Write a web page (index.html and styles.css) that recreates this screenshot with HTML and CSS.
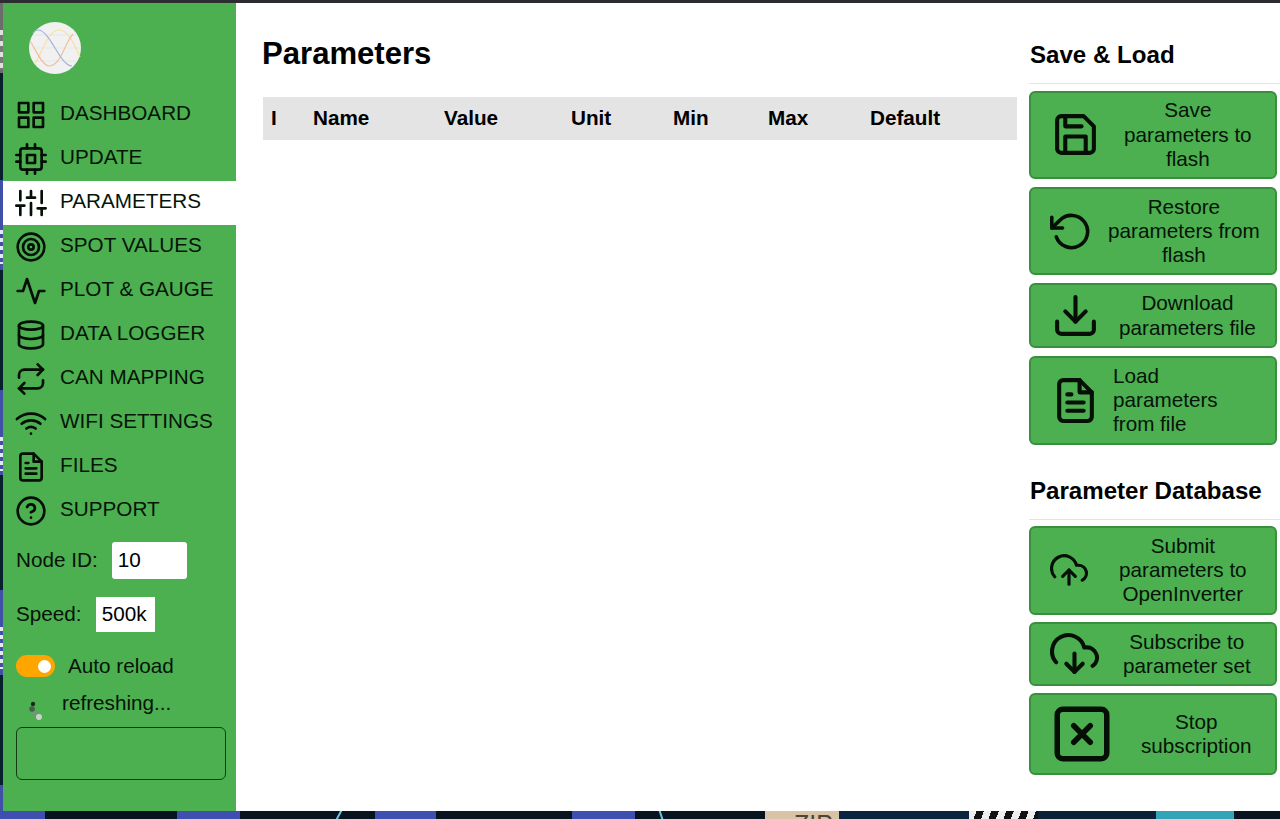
FILE: index.html
```html
<!DOCTYPE html>
<html lang="en">
<head>
<meta charset="utf-8">
<title>Parameters</title>
<link rel="stylesheet" href="styles.css">
</head>
<body>
<svg class="defs" width="0" height="0" aria-hidden="true">
  <symbol id="i-grid" viewBox="0 0 24 24"><rect x="3" y="3" width="7" height="7"/><rect x="14" y="3" width="7" height="7"/><rect x="14" y="14" width="7" height="7"/><rect x="3" y="14" width="7" height="7"/></symbol>
  <symbol id="i-cpu" viewBox="0 0 24 24"><rect x="4" y="4" width="16" height="16" rx="2"/><rect x="9" y="9" width="6" height="6"/><path d="M9 1v3M15 1v3M9 20v3M15 20v3M20 9h3M20 14h3M1 9h3M1 14h3"/></symbol>
  <symbol id="i-sliders" viewBox="0 0 24 24"><path d="M4 21v-7M4 10V3M12 21v-9M12 8V3M20 21v-5M20 12V3M1 14h6M9 8h6M17 16h6"/></symbol>
  <symbol id="i-target" viewBox="0 0 24 24"><circle cx="12" cy="12" r="10"/><circle cx="12" cy="12" r="6"/><circle cx="12" cy="12" r="2"/></symbol>
  <symbol id="i-activity" viewBox="0 0 24 24"><path d="M22 12h-4l-3 9L9 3l-3 9H2"/></symbol>
  <symbol id="i-database" viewBox="0 0 24 24"><ellipse cx="12" cy="5" rx="9" ry="3"/><path d="M21 12c0 1.66-4 3-9 3s-9-1.34-9-3"/><path d="M3 5v14c0 1.66 4 3 9 3s9-1.34 9-3V5"/></symbol>
  <symbol id="i-repeat" viewBox="0 0 24 24"><path d="M17 1l4 4-4 4"/><path d="M3 11V9a4 4 0 0 1 4-4h14"/><path d="M7 23l-4-4 4-4"/><path d="M21 13v2a4 4 0 0 1-4 4H3"/></symbol>
  <symbol id="i-wifi" viewBox="0 0 24 24"><path d="M5 12.55a11 11 0 0 1 14.08 0"/><path d="M1.42 9a16 16 0 0 1 21.16 0"/><path d="M8.53 16.11a6 6 0 0 1 6.95 0"/><path d="M12 20h.01"/></symbol>
  <symbol id="i-file" viewBox="0 0 24 24"><path d="M14 2H6a2 2 0 0 0-2 2v16a2 2 0 0 0 2 2h12a2 2 0 0 0 2-2V8z"/><path d="M14 2v6h6"/><path d="M16 13H8M16 17H8M10 9H8"/></symbol>
  <symbol id="i-help" viewBox="0 0 24 24"><circle cx="12" cy="12" r="10"/><path d="M9.09 9a3 3 0 0 1 5.83 1c0 2-3 3-3 3"/><path d="M12 17h.01"/></symbol>
  <symbol id="i-save" viewBox="0 0 24 24"><path d="M19 21H5a2 2 0 0 1-2-2V5a2 2 0 0 1 2-2h11l5 5v11a2 2 0 0 1-2 2z"/><path d="M17 21v-8H7v8"/><path d="M7 3v5h8"/></symbol>
  <symbol id="i-restore" viewBox="0 0 24 24"><path d="M1 4v6h6"/><path d="M3.51 15a9 9 0 1 0 2.13-9.36L1 10"/></symbol>
  <symbol id="i-download" viewBox="0 0 24 24"><path d="M21 15v4a2 2 0 0 1-2 2H5a2 2 0 0 1-2-2v-4"/><path d="M7 10l5 5 5-5"/><path d="M12 15V3"/></symbol>
  <symbol id="i-upcloud" viewBox="0 0 24 24"><path d="M16 16l-4-4-4 4"/><path d="M12 12v9"/><path d="M20.39 18.39A5 5 0 0 0 18 9h-1.26A8 8 0 1 0 3 16.3"/></symbol>
  <symbol id="i-downcloud" viewBox="0 0 24 24"><path d="M8 17l4 4 4-4"/><path d="M12 12v9"/><path d="M20.88 18.09A5 5 0 0 0 18 9h-1.26A8 8 0 1 0 3 16.29"/></symbol>
  <symbol id="i-xsquare" viewBox="0 0 24 24"><rect x="3" y="3" width="18" height="18" rx="2"/><path d="M9 9l6 6M15 9l-6 6"/></symbol>
</svg>

<div class="topbar"></div>
<div class="desk">
  <div class="edge"></div>
  <div class="window">
    <aside class="sidebar">
      <svg class="logo" viewBox="0 0 52 52" aria-label="logo">
        <circle cx="26" cy="26" r="26" fill="#f1f1f1"/>
        <path class="logo-grid" d="M5 13h42M1 26h50M5 39h42"/>
        <path class="logo-yellow" d="M5 42C12 36 18 8 30 8C40 8 46 24 51 35"/>
        <path class="logo-orange" d="M1 19C6 26 13 44 20 44C32 44 36 20 44 12"/>
        <path class="logo-blue" d="M4 11C5.500 9 7 8 9 8C21 8 31 44 43 44"/>
      </svg>
      <nav class="nav">
        <a class="nav-item"><svg class="ic ic-nav"><use href="#i-grid"/></svg><span class="nav-label">DASHBOARD</span></a>
        <a class="nav-item"><svg class="ic ic-nav"><use href="#i-cpu"/></svg><span class="nav-label">UPDATE</span></a>
        <a class="nav-item active"><svg class="ic ic-nav"><use href="#i-sliders"/></svg><span class="nav-label">PARAMETERS</span></a>
        <a class="nav-item"><svg class="ic ic-nav"><use href="#i-target"/></svg><span class="nav-label">SPOT VALUES</span></a>
        <a class="nav-item"><svg class="ic ic-nav"><use href="#i-activity"/></svg><span class="nav-label">PLOT &amp; GAUGE</span></a>
        <a class="nav-item"><svg class="ic ic-nav"><use href="#i-database"/></svg><span class="nav-label">DATA LOGGER</span></a>
        <a class="nav-item"><svg class="ic ic-nav"><use href="#i-repeat"/></svg><span class="nav-label">CAN MAPPING</span></a>
        <a class="nav-item"><svg class="ic ic-nav"><use href="#i-wifi"/></svg><span class="nav-label">WIFI SETTINGS</span></a>
        <a class="nav-item"><svg class="ic ic-nav"><use href="#i-file"/></svg><span class="nav-label">FILES</span></a>
        <a class="nav-item"><svg class="ic ic-nav"><use href="#i-help"/></svg><span class="nav-label">SUPPORT</span></a>
      </nav>
      <div class="field field-node"><label>Node ID:</label><input class="input-node" value="10"></div>
      <div class="field field-speed"><label>Speed:</label><span class="select-speed">500k</span></div>
      <div class="field field-toggle"><span class="toggle"><span class="knob"></span></span><span>Auto reload</span></div>
      <div class="field field-refresh">
        <svg class="spinner" viewBox="0 0 20 24"><circle cx="8" cy="4" r="2.2" fill="#1c2a1e"/><circle cx="7" cy="9" r="2.8" fill="#4b5a4e"/><circle cx="10" cy="14" r="2.4" fill="#7f8d82"/><circle cx="14" cy="17" r="3" fill="#c9d3ca"/></svg>
        <span>refreshing...</span>
      </div>
      <div class="message"></div>
    </aside>

    <main class="content">
      <h1 class="title">Parameters</h1>
      <table class="params">
        <thead>
          <tr>
            <th class="c-i">I</th><th class="c-name">Name</th><th class="c-value">Value</th><th class="c-unit">Unit</th><th class="c-min">Min</th><th class="c-max">Max</th><th>Default</th>
          </tr>
        </thead>
      </table>
    </main>

    <section class="actions">
      <h2 class="group-title first">Save &amp; Load</h2>
      <div class="group">
        <button class="btn gap-24"><svg class="ic ic-btn"><use href="#i-save"/></svg><span>Save<br>parameters to<br>flash</span></button>
        <button class="btn pad-19 gap-15"><svg class="ic ic-restore"><use href="#i-restore"/></svg><span>Restore<br>parameters from<br>flash</span></button>
        <button class="btn gap-19"><svg class="ic ic-btn"><use href="#i-download"/></svg><span>Download<br>parameters file</span></button>
        <button class="btn gap-13"><svg class="ic ic-btn"><use href="#i-file"/></svg><span class="left">Load<br>parameters<br>from file</span></button>
      </div>
      <h2 class="group-title second">Parameter Database</h2>
      <div class="group group-db">
        <button class="btn pad-19 gap-31"><svg class="ic ic-small"><use href="#i-upcloud"/></svg><span>Submit<br>parameters to<br>OpenInverter</span></button>
        <button class="btn pad-19 gap-24"><svg class="ic ic-btn"><use href="#i-downcloud"/></svg><span>Subscribe to<br>parameter set</span></button>
        <button class="btn pad-18 gap-26"><svg class="ic ic-large"><use href="#i-xsquare"/></svg><span>Stop<br>subscription</span></button>
      </div>
    </section>
  </div>
</div>
<div class="wallpaper">
  <span class="slash slash-a"></span>
  <span class="slash slash-b"></span>
  <span class="zip">ZIP</span>
  <span class="stripes"></span>
</div>
</body>
</html>
```

FILE: styles.css
```css
* { box-sizing: border-box; }

html, body {
  margin: 0;
  height: 100%;
  overflow: hidden;
}

body {
  display: flex;
  flex-direction: column;
  background: #07131f;
  color: #000;
  font-family: "Liberation Sans", Arial, sans-serif;
  font-size: 20.7px;
}

.defs { position: absolute; }

.topbar {
  height: 3px;
  flex: none;
  background: #2b2d31;
}

.desk {
  display: flex;
  flex: none;
  height: 808px;
}

.edge {
  width: 3px;
  flex: none;
  background-color: #08202c;
  background-image:
    repeating-linear-gradient(to bottom, #e8e8f0 0 4px, #3f50a6 4px 8px),
    repeating-linear-gradient(to bottom, #e8e8f0 0 4px, #3f50a6 4px 8px),
    repeating-linear-gradient(to bottom, #e8e8f0 0 4px, #3f50a6 4px 8px),
    repeating-linear-gradient(to bottom, #e0e0e0 0 5px, #777 5px 11px),
    linear-gradient(to bottom,
      #6c6c6c 0, #6c6c6c 70px, #08202c 70px, #08202c 177px,
      #3f50a6 177px, #3f50a6 267px, #08202c 267px, #08202c 387px,
      #3f50a6 387px, #3f50a6 472px, #08202c 472px, #08202c 587px,
      #3f50a6 587px, #3f50a6 672px, #08202c 672px, #08202c 782px,
      #3f50a6 782px);
  background-repeat: no-repeat;
  background-size: 100% 34px, 100% 34px, 100% 42px, 100% 40px, 100% 100%;
  background-position: 0 227px, 0 434px, 0 624px, 0 27px, 0 0;
}

.window {
  display: flex;
  flex: 1;
  min-width: 0;
  background: #fff;
}

.ic {
  display: block;
  flex: none;
  fill: none;
  stroke: #050f06;
  stroke-width: 2;
  stroke-linecap: round;
  stroke-linejoin: round;
}

/* Sidebar */
.sidebar {
  width: 233px;
  flex: none;
  padding-top: 19px;
  background: #4caf50;
  color: #061407;
}

.logo {
  display: block;
  width: 52px;
  height: 52px;
  margin-left: 26px;
}

.logo-grid { fill: none; stroke: #e0e0e0; stroke-width: .6; }
.logo-yellow { fill: none; stroke: #f6e2a0; stroke-width: 1.2; }
.logo-orange { fill: none; stroke: #f2c09a; stroke-width: 1.2; }
.logo-blue { fill: none; stroke: #a5b3d8; stroke-width: 1.2; }

.nav { margin-top: 19px; }

.nav-item {
  display: flex;
  align-items: center;
  gap: 13px;
  height: 44px;
  padding-left: 12px;
}

.nav-item.active { background: #fff; }

.ic-nav { width: 32px; height: 32px; }

.nav-label { padding-bottom: 5px; }

.field {
  display: flex;
  align-items: center;
  padding-left: 13px;
}

.field label { padding-bottom: 2px; }

.field-node { margin-top: 9px; gap: 14px; }
.field-speed { margin-top: 18px; gap: 14px; }
.field-toggle { margin-top: 22px; gap: 13px; }
.field-refresh { margin-top: 14.5px; height: 21px; padding-left: 22px; gap: 17px; }

.input-node {
  width: 75px;
  height: 37px;
  padding: 0 6px 2px;
  border: 0;
  border-radius: 3px;
  background: #fff;
  color: #000;
  font: inherit;
}

.select-speed {
  display: flex;
  align-items: center;
  justify-content: center;
  width: 59px;
  height: 35px;
  padding: 0 2px 2px 0;
  background: #fff;
  color: #000;
}

.toggle {
  position: relative;
  display: block;
  width: 39px;
  height: 22px;
  border-radius: 11px;
  background: #ffa500;
}

.knob {
  position: absolute;
  top: 4.5px;
  right: 4.5px;
  width: 13px;
  height: 13px;
  border-radius: 50%;
  background: #fff;
}

.spinner {
  display: block;
  width: 20px;
  height: 24px;
  margin-top: 17px;
  flex: none;
}

.message {
  width: 210px;
  height: 53px;
  margin: 13.500px 0 0 13px;
  border: 1px solid #123a15;
  border-radius: 6px;
}

/* Main */
.content {
  width: 793px;
  flex: none;
  padding-left: 26px;
}

.title {
  margin: 32.500px 0 0;
  font-size: 31.1px;
  line-height: 36px;
  font-weight: 700;
}

.params {
  width: 754px;
  margin: 25.500px 0 0 1px;
  border-collapse: collapse;
  table-layout: fixed;
  background: #e4e4e4;
}

.params th {
  height: 43px;
  padding: 0 0 2px 8px;
  font-weight: 700;
  text-align: left;
}

.c-i { width: 42px; }
.c-name { width: 131px; }
.c-value { width: 127px; }
.c-unit { width: 102px; }
.c-min { width: 95px; }
.c-max { width: 102px; }

/* Right column */
.actions {
  flex: 1;
  min-width: 0;
}

.group-title {
  margin: 0;
  padding-left: 1px;
  font-size: 24.1px;
  line-height: 29px;
  font-weight: 700;
  border-bottom: 1px solid #e2e2e2;
}

.group-title.first { margin-top: 37px; padding-bottom: 14px; }
.group-title.second { margin-top: 31px; padding-bottom: 14px; }

.group {
  display: flex;
  flex-direction: column;
  gap: 8px;
  margin-top: 6.5px;
  padding-right: 3px;
}

.group-db { gap: 7px; }

.btn {
  display: flex;
  align-items: center;
  width: 248px;
  padding: 5.8px 0 5.8px 20px;
  border: 2px solid #3a8f3e;
  border-radius: 6px;
  background: #4caf50;
  color: #061407;
  font: inherit;
  line-height: 24.3px;
  text-align: center;
}

.pad-18 { padding-left: 18px; }
.pad-19 { padding-left: 19px; }

.left { text-align: left; }

.gap-13 { gap: 13px; }
.gap-15 { gap: 15px; }
.gap-19 { gap: 19px; }
.gap-24 { gap: 24px; }
.gap-26 { gap: 26px; }
.gap-31 { gap: 31px; }

.ic-btn { width: 49px; height: 49px; }
.ic-restore { width: 43px; height: 43px; }
.ic-small { width: 38px; height: 38px; }
.ic-large { width: 66px; height: 66px; }

/* Desktop visible below the window */
.wallpaper {
  position: relative;
  flex: 1;
  overflow: hidden;
  background: linear-gradient(to right,
    #3f4fb0 0, #3f4fb0 45px, #07131f 45px, #07131f 177px,
    #3f4fb0 177px, #3f4fb0 240px, #07131f 240px, #07131f 375px,
    #3f4fb0 375px, #3f4fb0 436px, #07131f 436px, #07131f 572px,
    #3f4fb0 572px, #3f4fb0 635px, #07131f 635px, #07131f 765px,
    #d9c3a6 765px, #d9c3a6 839px, #0a2440 839px, #0a2440 969px,
    #0a2036 1038px, #0a2036 1156px,
    #33a4b8 1156px, #33a4b8 1234px, #07131f 1234px);
}

.slash {
  position: absolute;
  top: -2px;
  width: 2px;
  height: 12px;
  background: #6cc6e0;
}

.slash-a { left: 338px; transform: rotate(28deg); }
.slash-b { left: 660px; transform: rotate(-18deg); }

.stripes {
  position: absolute;
  top: 0;
  left: 969px;
  width: 69px;
  height: 8px;
  background: repeating-linear-gradient(110deg, #eee 0 7px, #111 7px 14px);
}

.zip {
  position: absolute;
  top: -1px;
  left: 794px;
  color: #4f4236;
  font-size: 25px;
  line-height: 28px;
}
```
